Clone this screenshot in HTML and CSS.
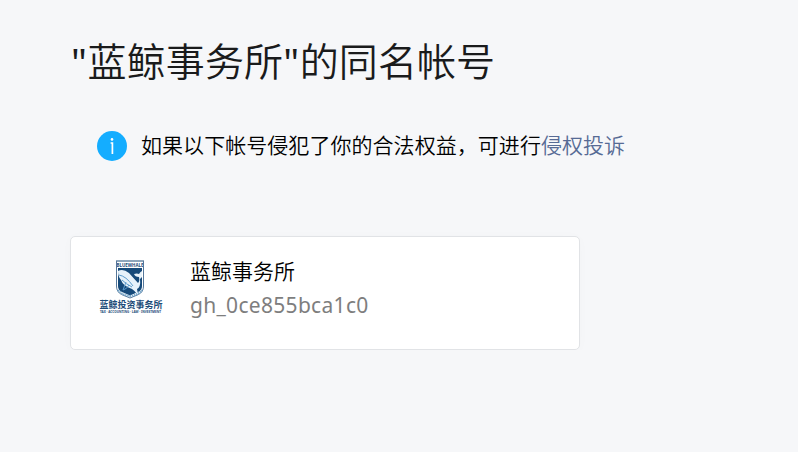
FILE: index.html
```html
<!DOCTYPE html>
<html lang="zh-CN">
<head>
    <meta charset="utf-8">
    <meta name="viewport" content="width=device-width, initial-scale=1.0">
    <title>同名帐号</title>
    <link rel="stylesheet" href="styles.css">
</head>
<body>
    <h2 class="page-title"><span class="quote">"</span>蓝鲸事务所<span class="quote">"</span>的同名帐号</h2>

    <!-- 提示 -->
    <div class="tips">
        <svg class="tips-icon" viewBox="0 0 30 30">
            <circle cx="15" cy="15" r="15" fill="#14adff"/>
            <circle cx="15" cy="8.4" r="1.3" fill="#fff"/>
            <path d="M13.600 12h1.800v11" fill="none" stroke="#fff" stroke-width="1.7"/>
        </svg>
        <p class="tips-text">如果以下帐号侵犯了你的合法权益，可进行<a class="link">侵权投诉</a></p>
    </div>

    <!-- 帐号卡片 -->
    <div class="account-card">
        <svg class="avatar" viewBox="0 0 66 66">
            <path d="M18 7h28" stroke="#1d4c78" stroke-width="1"/>
            <text class="logo-top" x="18.5" y="12.6" textLength="27" lengthAdjust="spacingAndGlyphs">BLUEWHALE</text>
            <path d="M18.5 7v25q0 6 5 8.5l8.5 3.5 8.5-3.5q5-2.5 5-8.5V7" fill="none" stroke="#55779a" stroke-width="1"/>
            <path d="M20 14h24v18q0 4-4 6l-8 3.5-8-3.5q-4-2-4-6z" fill="#164a7a"/>
            <!-- 鲸鱼 -->
            <path d="M20 17q5-3 11 2l9 10q2-2 1-6-4 0-5-3 3-1 5 0 1-2 3-3v6l-2 2q1 8-3 10 1 3 0 5-2-3-5-5-9-3-11-9-3-3-3-9z" fill="#e7f2fa"/>
            <path d="M21 21q7 1 14 11M24 26q4 4 10 7M28 28l-3 8q4-1 6-5" fill="none" stroke="#5c9ccd" stroke-width="1"/>
            <path d="M20 36q4 5 12 6 8-1 12-6" fill="none" stroke="#76a8cc" stroke-width="2" stroke-dasharray="1.5 .7"/>
            <text class="logo-name" x="1.5" y="54.2" textLength="63">蓝鲸投资事务所</text>
            <text class="logo-sub" x="2" y="59" textLength="61" lengthAdjust="spacingAndGlyphs">TAX · ACCOUNTING · LAW · INVESTMENT</text>
        </svg>
        <div class="account-info">
            <p class="account-name">蓝鲸事务所</p>
            <p class="account-id">gh_0ce855bca1c0</p>
        </div>
    </div>
</body>
</html>
```

FILE: styles.css
```css
body {
    margin: 0;
    padding: 32px 70px 0;
    background-color: #f6f7f9;
    color: #000;
    font-family: "Noto Sans", "Noto Sans CJK SC", sans-serif;
    font-weight: 350;
}

p {
    margin: 0;
}

.page-title {
    margin: 0;
    padding-left: 1px;
    color: #1a1b1c;
    font-size: 39px;
    font-weight: 350;
    line-height: 58px;
    letter-spacing: 0.12px;
}

.quote {
    font-weight: 400;
    letter-spacing: 0.6px;
}

.tips {
    display: flex;
    align-items: center;
    margin-top: 39px;
    padding-left: 27px;
    height: 34px;
}

.tips-icon {
    width: 30px;
    height: 30px;
    margin-right: 14px;
}

.tips-text {
    margin-top: -2px;
    font-size: 21px;
    line-height: 34px;
    letter-spacing: 0.05px;
}

.link {
    color: #576b95;
}

.account-card {
    display: flex;
    box-sizing: border-box;
    width: 510px;
    height: 114px;
    margin-top: 73px;
    padding: 17px 27px;
    background-color: #fff;
    border: 1px solid #e1e3e6;
    border-radius: 5px;
    box-shadow: 0 1px 12px rgba(0, 0, 0, 0.02);
}

.avatar {
    width: 66px;
    height: 66px;
    margin-right: 26px;
}

.logo-top,
.logo-name,
.logo-sub {
    fill: #1d4c78;
    font-weight: 700;
}

.logo-top {
    font-size: 4.5px;
}

.logo-name {
    font-size: 9px;
}

.logo-sub {
    font-size: 2.6px;
}

.account-name,
.account-id {
    font-size: 21px;
    line-height: 34px;
}

.account-id {
    color: #7e7e7e;
    font-weight: 400;
    letter-spacing: 0.3px;
}
```
